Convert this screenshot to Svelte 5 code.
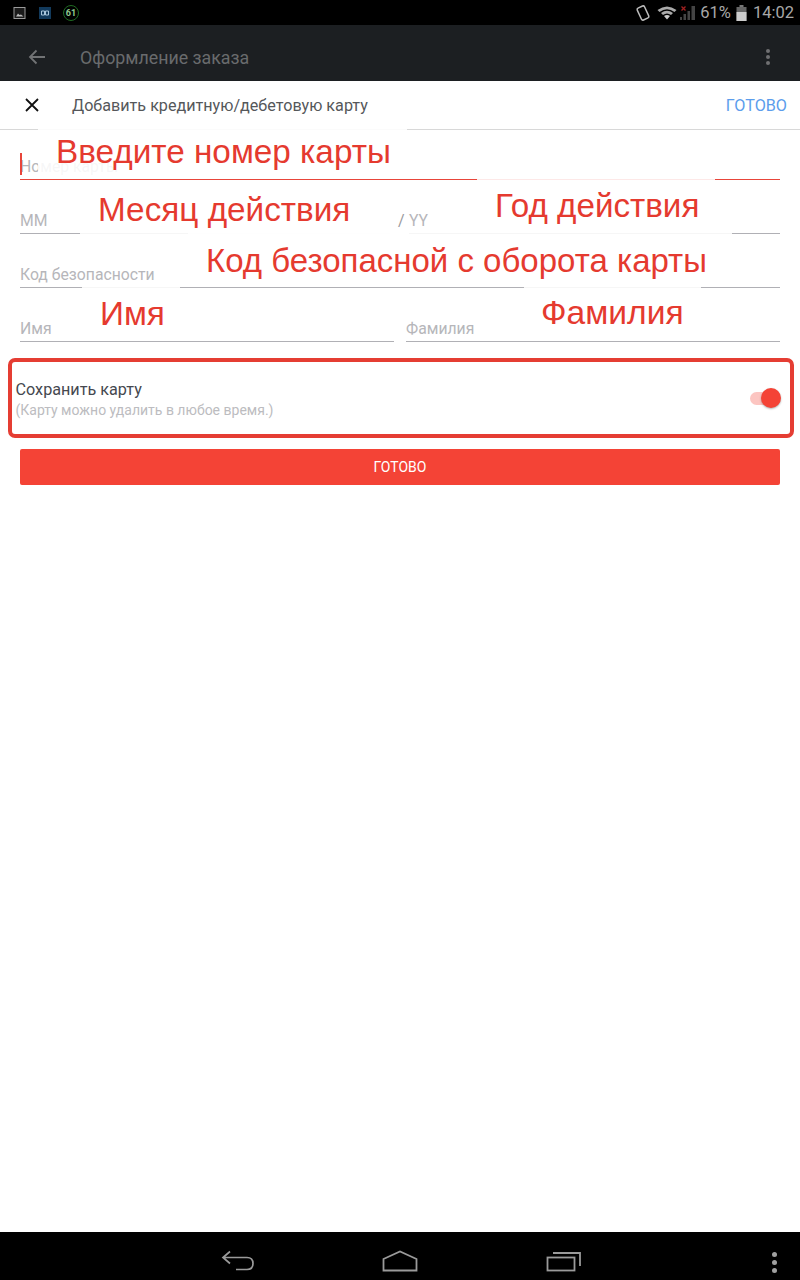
<script>
  // annotation overlays drawn on top of the form in the screenshot
  const notes = [
    { text: 'Введите номер карты', x: 38, y: 129, w: 369, h: 46, lh: 46, pad: 18, fs: 33.3 },
    { text: 'Месяц действия', x: 80, y: 187, w: 310, h: 47, lh: 46, pad: 18, fs: 33.3 },
    { text: 'Год действия', x: 477, y: 179, w: 238, h: 50, lh: 54, pad: 18, fs: 33.2 },
    { text: 'Код безопасной с оборота карты', x: 188, y: 233, w: 544, h: 52, lh: 56, pad: 18, fs: 33 },
    { text: 'Имя', x: 82, y: 287, w: 98, h: 49, lh: 54, pad: 18, fs: 33.3 },
    { text: 'Фамилия', x: 524, y: 287, w: 177, h: 47, lh: 52, pad: 17, fs: 33.6 }
  ];
</script>

<div class="screen">
  <header class="status">
    <div class="status-left">
      <svg width="14" height="14" viewBox="0 0 14 14">
        <rect x="1" y="1.5" width="11" height="11" fill="#1a1a1a" stroke="#9a9a9a" />
        <path d="M3 10.5 L5 7.5 L6.5 9 L8 8.500 L10.500 10.500 Z" fill="#bbb" />
      </svg>
      <svg width="12" height="12" viewBox="0 0 12 12">
        <rect width="12" height="12" fill="#123a5c" />
        <path d="M2.500 4h3v4h-3zM6.500 4h3v4h-3z" fill="none" stroke="#a8c6dc" />
      </svg>
      <span class="ring">61</span>
    </div>
    <div class="status-right">
      <svg width="16" height="18" viewBox="0 0 16 18">
        <rect x="4" y="2.500" width="8" height="13" rx="1.500" transform="rotate(-25 8 9)" fill="none" stroke="#bbb" stroke-width="1.500" />
      </svg>
      <svg width="20" height="16" viewBox="0 0 20 16">
        <path d="M0.500 5 Q10 -2 19.500 5 L17.500 7 Q10 1.500 2.500 7 Z" fill="#aaa" />
        <path d="M4 8 Q10 3.500 16 8 L14 10 Q10 7 6 10 Z" fill="#aaa" />
        <path d="M7 11 Q10 9 13 11 L10 14.500 Z" fill="#ccc" />
      </svg>
      <svg width="16" height="16" viewBox="0 0 16 16">
        <path d="M0 15h2v-3H0zM3.500 15h2.500V9H3.500zM7.500 15H10V6H7.500zM11.500 15H15V1h-3.500z" fill="#444" />
        <path d="M1.500 1.500l4 4M5.500 1.500l-4 4" stroke="#a02020" stroke-width="1.300" />
      </svg>
      <span class="pct">61%</span>
      <svg width="11" height="18" viewBox="0 0 11 18">
        <rect x="3.500" y="1" width="4" height="2" fill="#777" />
        <rect x="0.500" y="3" width="10" height="14" fill="#666" />
        <rect x="0.500" y="8" width="10" height="9" fill="#ccc" />
      </svg>
      <span class="clock">14:02</span>
    </div>
  </header>

  <div class="appbar">
    <svg class="back" width="18" height="16" viewBox="0 0 18 16">
      <path d="M17 8H2M8.500 1.500 2 8l6.500 6.500" fill="none" stroke="#717375" stroke-width="1.800" />
    </svg>
    <span class="appbar-title">Оформление заказа</span>
    <span class="dots"><i></i><i></i><i></i></span>
  </div>

  <main class="sheet">
    <div class="sheet-head">
      <svg class="close" width="14" height="14" viewBox="0 0 14 14">
        <path d="M1 1l12 12M13 1 1 13" stroke="#111" stroke-width="1.800" />
      </svg>
      <span class="sheet-title">Добавить кредитную/дебетовую карту</span>
      <span class="done">ГОТОВО</span>
    </div>

    <div class="form">
      <div class="row first">
        <div class="field active"><span class="caret"></span>Номер карты</div>
      </div>
      <div class="row date">
        <div class="field">ММ</div>
        <span class="slash">/</span>
        <div class="field">YY</div>
      </div>
      <div class="row">
        <div class="field">Код безопасности</div>
      </div>
      <div class="row names">
        <div class="field">Имя</div>
        <div class="field">Фамилия</div>
      </div>
    </div>

    <div class="save">
      <div class="save-text">
        <span class="save-title">Сохранить карту</span>
        <span class="save-hint">(Карту можно удалить в любое время.)</span>
      </div>
      <span class="switch"><span class="thumb"></span></span>
    </div>

    <button class="submit">ГОТОВО</button>
  </main>

  <footer class="nav">
    <svg class="nav-back" width="34" height="22" viewBox="0 0 34 22">
      <path d="M9 1.500 2 7.500l7 6M2 7.500h24q6 0 6 6t-6 6H15" fill="none" stroke="#9a9a9a" stroke-width="1.700" />
    </svg>
    <svg class="nav-home" width="36" height="22" viewBox="0 0 36 22">
      <path d="M1.500 20.500V9L18 1.500 34.500 9v11.500Z" fill="none" stroke="#9a9a9a" stroke-width="1.800" />
    </svg>
    <svg class="nav-recent" width="36" height="22" viewBox="0 0 36 22">
      <rect x="1.500" y="7.500" width="27" height="13" fill="none" stroke="#9a9a9a" stroke-width="1.800" />
      <path d="M7 3h27v13" fill="none" stroke="#9a9a9a" stroke-width="1.800" />
    </svg>
    <span class="nav-dots"><i></i><i></i><i></i></span>
  </footer>

  {#each notes as n}
    <div class="note" style="left:{n.x}px;top:{n.y}px;width:{n.w}px;height:{n.h}px;line-height:{n.lh}px;padding-left:{n.pad}px;font-size:{n.fs}px">{n.text}</div>
  {/each}
</div>

<style>
  :global(body) {
    margin: 0;
    background: #fff;
  }

  .screen {
    position: relative;
    width: 800px;
    height: 1280px;
    display: flex;
    flex-direction: column;
    overflow: hidden;
    font-family: Roboto, "Noto Sans", sans-serif;
    background: #fff;
  }

  .status {
    height: 25px;
    background: #000;
    display: flex;
    justify-content: space-between;
    align-items: center;
    flex: none;
  }

  .status-left {
    display: flex;
    align-items: center;
    gap: 12px;
    padding-left: 13px;
  }

  .ring {
    width: 14px;
    height: 14px;
    border: 1.500px solid #1f6b22;
    border-radius: 50%;
    color: #8fc98f;
    font-size: 9px;
    font-weight: 700;
    display: flex;
    align-items: center;
    justify-content: center;
  }

  .status-right {
    display: flex;
    align-items: center;
    color: #a8a8a8;
    font-size: 16.500px;
    padding-right: 6px;
  }

  .status-right svg:nth-child(1) { margin-right: 6px; }
  .status-right svg:nth-child(2) { margin-right: 3px; }
  .pct { margin: 0 5px 0 4px; }
  .clock { margin-left: 6px; }

  .appbar {
    box-sizing: border-box;
    height: 56px;
    padding: 8px 0 0 28px;
    flex: none;
    background: #1c1f22;
    display: flex;
    align-items: center;
  }

  .appbar-title {
    margin-left: 34px;
    font-size: 17.800px;
    color: #696b6d;
  }

  .dots {
    margin-left: auto;
    margin-right: 30px;
    display: flex;
    flex-direction: column;
    gap: 2px;
  }

  .dots i {
    width: 4px;
    height: 4px;
    border-radius: 50%;
    background: #6f7072;
  }

  .sheet {
    flex: 1;
    display: flex;
    flex-direction: column;
  }

  .sheet-head {
    height: 48px;
    border-bottom: 1px solid #d8d8d8;
    display: flex;
    align-items: center;
    flex: none;
  }

  .close {
    margin-left: 25px;
  }

  .sheet-title {
    margin-left: 33px;
    font-size: 16.150px;
    color: #55575a;
  }

  .done {
    margin-left: auto;
    margin-right: 13px;
    font-size: 16.200px;
    color: #5c9dec;
  }

  .form {
    padding: 0 20px;
    display: flex;
    flex-direction: column;
  }

  .row {
    height: 54px;
    display: flex;
    align-items: flex-end;
  }

  .row.first {
    height: 50px;
  }

  .field {
    flex: 1;
    position: relative;
    height: 30px;
    line-height: 29px;
    box-sizing: border-box;
    border-bottom: 1px solid #b0b0b5;
    font-size: 15.750px;
    color: #b6b6ba;
    padding-top: 2px;
  }

  .field.active {
    border-bottom-color: #e8453a;
  }

  .caret {
    position: absolute;
    left: 0;
    top: 3px;
    width: 2px;
    height: 22px;
    background: #e8453a;
  }

  .date .slash {
    width: 19px;
    box-sizing: border-box;
    padding: 0 0 1px 8px;
    font-size: 16px;
    color: #9a9a9e;
    line-height: 24px;
  }

  .date .field:first-child {
    flex: 0 0 370px;
  }

  .names {
    gap: 12px;
  }

  .save {
    box-sizing: border-box;
    height: 80px;
    margin: 16px 6.500px 11px 8px;
    border: 4.500px solid #e53d33;
    border-radius: 7px;
    display: flex;
    align-items: center;
    justify-content: space-between;
    flex: none;
  }

  .save-text {
    display: flex;
    flex-direction: column;
    padding-left: 3.500px;
    padding-top: 3px;
  }

  .save-title {
    font-size: 16.200px;
    line-height: 20px;
    color: #45484f;
  }

  .save-hint {
    font-size: 14px;
    line-height: 20px;
    color: #bcbcc0;
  }

  .switch {
    position: relative;
    width: 28px;
    height: 13px;
    margin-right: 11.500px;
    border-radius: 7px;
    background: #fcc5c1;
  }

  .thumb {
    position: absolute;
    right: -3px;
    top: -3.500px;
    width: 20px;
    height: 20px;
    border-radius: 50%;
    background: #f44336;
    box-shadow: 0 1px 2px rgba(0, 0, 0, 0.3);
  }

  .submit {
    margin: 0 20px;
    height: 36px;
    flex: none;
    border: 0;
    border-radius: 2px;
    background: #f44336;
    color: #fff;
    font-family: inherit;
    font-size: 14px;
    padding: 0;
  }

  .nav {
    position: relative;
    height: 48px;
    flex: none;
    background: #000;
  }

  .nav svg,
  .nav-dots {
    position: absolute;
  }

  .nav-back { left: 221px; top: 18px; }
  .nav-home { left: 382px; top: 18px; }
  .nav-recent { left: 546px; top: 18px; }

  .nav-dots {
    left: 772px;
    top: 20px;
    display: flex;
    flex-direction: column;
    gap: 3px;
  }

  .nav-dots i {
    width: 5px;
    height: 5px;
    border-radius: 50%;
    background: #a0a0a0;
  }

  .note {
    position: absolute;
    box-sizing: border-box;
    background: rgba(255, 255, 255, 0.88);
    color: #e53a2f;
    font-family: "Liberation Sans", Arial, sans-serif;
    white-space: nowrap;
  }
</style>
